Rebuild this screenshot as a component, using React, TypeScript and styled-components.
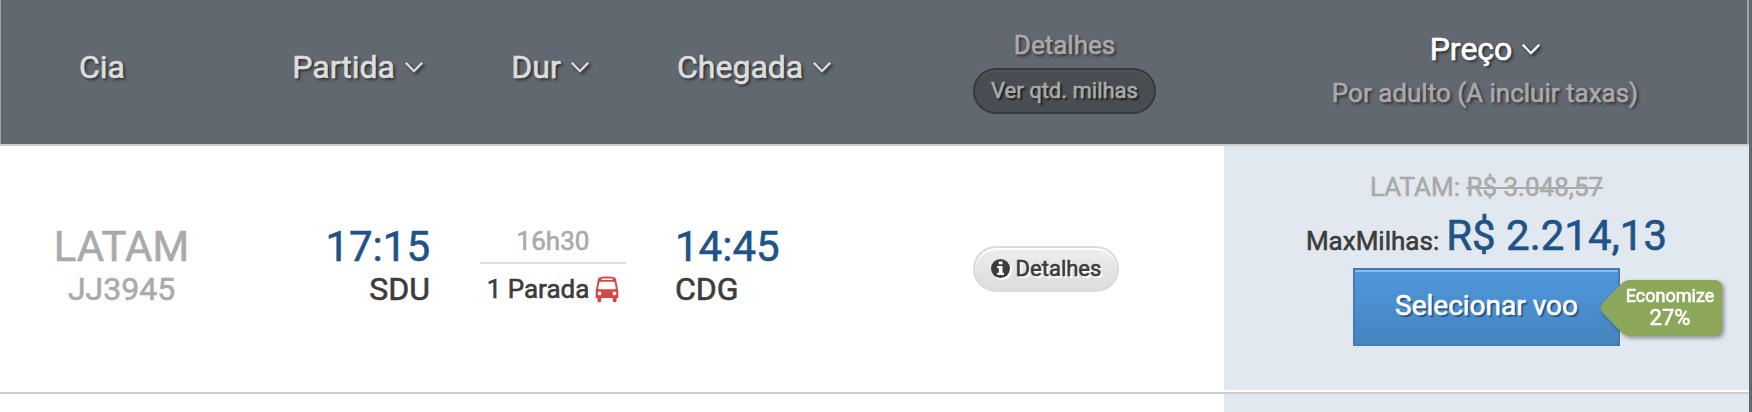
import React from 'react';
import styled, { createGlobalStyle } from 'styled-components';

const GlobalStyle = createGlobalStyle`
  * { box-sizing: border-box; }
  body {
    margin: 0;
    background: #61686f;
    font-family: Roboto, sans-serif;
    overflow: hidden;
    -webkit-text-stroke: 0.6px currentColor;
  }
`;

const columns = '242px 210px 202px 319px 251px 525px';

const Page = styled.main`
  width: 1749px;
  height: 412px;
  background: #fff;
  overflow: hidden;
`;

const Header = styled.header`
  display: grid;
  grid-template-columns: ${columns};
  height: 146px;
  background: #61686f;
  border-bottom: 2px solid #ccc;
  box-shadow: inset 1px 0 #a0a3a6, inset -2px 0 #a0a4a7;
  text-shadow: 2px 2px 3px rgba(0, 0, 0, 0.6);
  color: #ddd;
`;

const Cell = styled.div<{ $align?: string; $pad?: string }>`
  display: flex;
  flex-direction: column;
  align-items: ${(p) => p.$align || 'center'};
  padding: ${(p) => p.$pad || '0'};
  min-width: 0;
`;

const PriceCell = styled(Cell)`
  background: #e1e8ef;
`;

const Text = styled.div<{ $size: number; $line: number; $color?: string }>`
  font-size: ${(p) => p.$size}px;
  line-height: ${(p) => p.$line}px;
  color: ${(p) => p.$color || 'inherit'};
  white-space: nowrap;
`;

const SortLabel = styled.div<{ $color?: string }>`
  display: flex;
  align-items: center;
  gap: 10px;
  font-size: 32px;
  line-height: 40px;
  color: ${(p) => p.$color || 'inherit'};
`;

const ChevronSvg = styled.svg`
  display: block;
  overflow: visible;
  filter: drop-shadow(2px 2px 1.5px rgba(0, 0, 0, 0.6));
`;

const Chevron = () => (
  <ChevronSvg width="18" height="11" viewBox="0 0 18 11" fill="none" stroke="currentColor" strokeWidth="2.3">
    <path d="M.8 .8 9 9.2 17.2 .8" />
  </ChevronSvg>
);

const MilesButton = styled.button`
  width: 183px;
  height: 46px;
  padding: 0 0 2px;
  margin-top: 7px;
  border: 2px solid #363a3c;
  border-radius: 23px;
  background: #484d51;
  box-shadow: inset 0 2px #515759;
  color: #aaa;
  font: 22px Roboto, sans-serif;
  -webkit-text-stroke: 0.6px currentColor;
  text-shadow: 2px 2px 2px rgba(0, 0, 0, 0.7);
  white-space: nowrap;
`;

const Row = styled.section`
  display: grid;
  grid-template-columns: ${columns};
  height: 248px;
  padding-bottom: 2px;
  border-bottom: 2px solid #ccc;
  color: #3c3c3c;
`;

const NextRow = styled(Row)`
  height: 18px;
  padding: 0;
  border: 0;
`;

const Divider = styled.div`
  width: 146px;
  height: 2px;
  margin: 5px 0 8px;
  background: #ddd;
`;

const Stops = styled.div`
  display: flex;
  align-items: center;
  gap: 6px;
`;

const DetailsButton = styled.button`
  display: flex;
  align-items: center;
  justify-content: center;
  gap: 6px;
  width: 146px;
  height: 46px;
  padding: 0 0 1px;
  border: 2px solid #dbdbdb;
  border-radius: 23px;
  background: linear-gradient(#eee, #dcdcdc);
  box-shadow: inset 0 2px #fff;
  color: #3c3c3c;
  font: 22px Roboto, sans-serif;
  -webkit-text-stroke: 0.6px currentColor;
  text-shadow: 2px 2px #fff;
`;

const InfoSvg = styled.svg`
  display: block;
  flex: none;
  overflow: visible;
  filter: drop-shadow(2px 2px 0 #fff);
`;

const Price = styled.div`
  display: flex;
  align-items: baseline;
  gap: 7px;
  height: 64px;
`;

const Strike = styled.span`
  text-decoration: line-through;
  text-decoration-thickness: 2px;
`;

const SelectWrap = styled.div`
  position: relative;
`;

const SelectButton = styled.button`
  display: block;
  width: 267px;
  height: 78px;
  padding: 0 0 3px;
  border: 2px solid #457ab5;
  background: linear-gradient(#5097db, #4585c0);
  box-shadow: inset 0 2px #8cb8f5;
  color: #fff;
  font: 28px Roboto, sans-serif;
  -webkit-text-stroke: 0.6px currentColor;
  text-shadow: 2px 2px 1px #24508c;
`;

const Badge = styled.div`
  position: absolute;
  left: 247px;
  top: 12px;
  width: 122px;
  height: 56px;
  padding: 6px 4px 0 22px;
  color: #fff;
  text-align: center;
  filter: drop-shadow(2px 2px 2px rgba(0, 0, 0, 0.4));
`;

const BadgeShape = styled.svg`
  position: absolute;
  inset: 0;
  z-index: -1;
`;

const Bus = () => (
  <svg width="24" height="27" viewBox="0 0 24 27">
    <path
      fill="#d14a45"
      fillRule="evenodd"
      d="M5 1.3C8 .3 16 .3 19 1.3c1.4.5 2 1.3 2.2 2.7L22.9 13c.3 1 .4 2 .4 3v6h-1.700v2.400c0 2.500-3.900 2.500-3.900 0V22H6.300v2.400c0 2.500-3.900 2.500-3.900 0V22H.7v-6c0-1 .1-2 .4-3L2.800 4C3 2.600 3.600 1.800 5 1.300ZM7 2.500c-1 0-1 1.600 0 1.600h10c1 0 1-1.600 0-1.600ZM5.300 5.700c-.4 0-.8.300-.9.800L3.200 12c-.1.700.3 1.200 1 1.200h15.600c.7 0 1.100-.5 1-1.200L19.600 6.500c-.1-.5-.5-.8-.9-.8ZM4.500 15.500a1.900 1.900 0 1 0 0 3.800 1.900 1.900 0 0 0 0-3.800ZM19.500 15.500a1.900 1.900 0 1 0 0 3.800 1.900 1.900 0 0 0 0-3.800Z"
    />
  </svg>
);

const Info = () => (
  <InfoSvg width="19" height="19" viewBox="0 0 19 19">
    <circle cx="9.5" cy="9.5" r="9.5" fill="#3c3c3c" />
    <path fill="#fff" d="M7.800 2.400h3.700v2.800H7.800ZM6.200 7h5.300v6.700H13V16H6.200v-2.300h1.700V9.300H6.200Z" />
  </InfoSvg>
);

export default function App() {
  return (
    <>
      <GlobalStyle />
      <Page>
        <Header>
          <Cell $pad="47px 38px 0 0"><Text $size={32} $line={40}>Cia</Text></Cell>
          <Cell $align="flex-end" $pad="47px 29px 0 0"><SortLabel>Partida<Chevron /></SortLabel></Cell>
          <Cell $pad="47px 6px 0 0"><SortLabel>Dur<Chevron /></SortLabel></Cell>
          <Cell $align="flex-start" $pad="47px 0 0 23px"><SortLabel>Chegada<Chevron /></SortLabel></Cell>
          <Cell $pad="29px 68px 0 0">
            <Text $size={26} $line={32} $color="#aaa">Detalhes</Text>
            <MilesButton>Ver qtd. milhas</MilesButton>
          </Cell>
          <Cell $pad="29px 3px 0 0">
            <SortLabel $color="#fff">Preço<Chevron /></SortLabel>
            <Text $size={26} $line={48} $color="#aaa">Por adulto (A incluir taxas)</Text>
          </Cell>
        </Header>
        <Row>
          <Cell $pad="77px 0 0 1px">
            <Text $size={42} $line={48} $color="#aaa">LATAM</Text>
            <Text $size={32} $line={36} $color="#aaa">JJ3945</Text>
          </Cell>
          <Cell $align="flex-end" $pad="77px 22px 0 0">
            <Text $size={42} $line={48} $color="#1f5388">17:15</Text>
            <Text $size={32} $line={36}>SDU</Text>
          </Cell>
          <Cell $pad="79px 0 0 0">
            <Text $size={26} $line={32} $color="#aaa">16h30</Text>
            <Divider />
            <Stops><Text $size={26} $line={34}>1 Parada</Text><Bus /></Stops>
          </Cell>
          <Cell $align="flex-start" $pad="77px 0 0 21px">
            <Text $size={42} $line={48} $color="#1f5388">14:45</Text>
            <Text $size={32} $line={36}>CDG</Text>
          </Cell>
          <Cell $align="flex-start" $pad="100px 0 0 0">
            <DetailsButton><Info />Detalhes</DetailsButton>
          </Cell>
          <PriceCell $pad="24px 0 0 0">
            <Text $size={26} $line={34} $color="#aaa">LATAM: <Strike>R$ 3.048,57</Strike></Text>
            <Price>
              <Text $size={26} $line={40}>MaxMilhas:</Text>
              <Text $size={42} $line={63} $color="#1f5388">R$ 2.214,13</Text>
            </Price>
            <SelectWrap>
              <SelectButton>Selecionar voo</SelectButton>
              <Badge>
                <BadgeShape width="122" height="56" viewBox="0 0 122 56">
                  <path fill="#8ca75a" d="M30 0h84q8 0 8 8v40q0 8-8 8H30q-5 0-9-4L2 32q-3-4 0-8L21 4q4-4 9-4Z" />
                </BadgeShape>
                <Text $size={18} $line={20}>Economize</Text>
                <Text $size={22} $line={24}>27%</Text>
              </Badge>
            </SelectWrap>
          </PriceCell>
        </Row>
        <NextRow>
          <Cell /><Cell /><Cell /><Cell /><Cell />
          <PriceCell />
        </NextRow>
      </Page>
    </>
  );
}
